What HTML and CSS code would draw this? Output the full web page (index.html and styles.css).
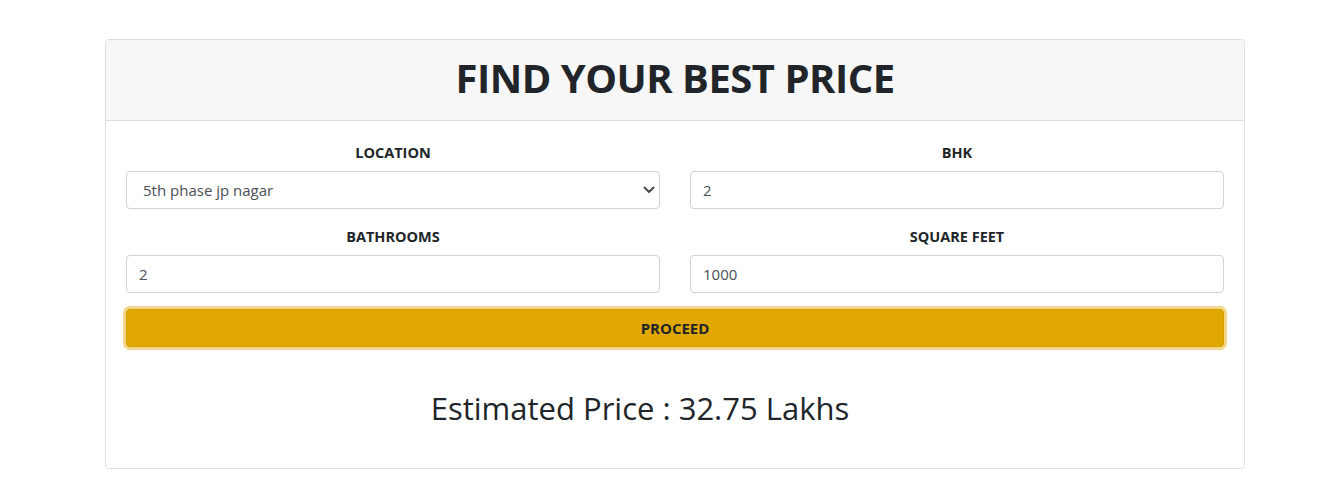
FILE: index.html
```html
<!DOCTYPE html>
<html lang="en">
<head>
<meta charset="utf-8">
<title>Find your best price</title>
<link rel="stylesheet" href="styles.css">
</head>
<body>
<main class="page">
  <section class="card">
    <header class="card-header">
      <h1 class="title">FIND YOUR BEST PRICE</h1>
    </header>
    <form class="card-body">
      <div class="grid">
        <div class="field">
          <label class="label" for="loc">LOCATION</label>
          <div class="select-wrap">
            <select id="loc" class="control select">
              <option>5th phase jp nagar</option>
            </select>
            <svg class="chevron" width="12" height="8" viewBox="0 0 12 8" aria-hidden="true"><path d="M1.5 1.5 L6 6 L10.5 1.5" fill="none" stroke="#4a4a4a" stroke-width="2" stroke-linecap="round" stroke-linejoin="round"/></svg>
          </div>
        </div>
        <div class="field">
          <label class="label" for="bhk">BHK</label>
          <input id="bhk" class="control" type="text" value="2">
        </div>
        <div class="field">
          <label class="label" for="bath">BATHROOMS</label>
          <input id="bath" class="control" type="text" value="2">
        </div>
        <div class="field">
          <label class="label" for="sqft">SQUARE FEET</label>
          <input id="sqft" class="control" type="text" value="1000">
        </div>
      </div>
      <button type="button" class="btn">PROCEED</button>
      <h2 class="result">Estimated Price : 32.75 Lakhs</h2>
    </form>
  </section>
</main>
</body>
</html>
```

FILE: styles.css
```css
* { box-sizing: border-box; }
html, body { margin: 0; padding: 0; background: #fff; }
body {
  font-family: "Open Sans", "Noto Sans", "Liberation Sans", sans-serif;
  color: #212529;
}
.page { padding-top: 39px; padding-left: 105px; }
.card {
  width: 1140px;
  border: 1px solid #dfdfdf;
  border-radius: 4px;
  background: #fff;
}
.card-header {
  height: 81px;
  background: #f7f7f7;
  border-bottom: 1px solid #dfdfdf;
  border-radius: 3px 3px 0 0;
  display: flex;
  align-items: center;
  justify-content: center;
}
.title {
  margin: 0;
  font-size: 40px;
  font-weight: 700;
  letter-spacing: -0.5px;
  line-height: 1;
  padding-bottom: 4px;
}
.card-body { padding: 20px 20px 20px; display: flex; flex-direction: column; }
.grid {
  display: grid;
  grid-template-columns: 534px 534px;
  column-gap: 30px;
  row-gap: 16px;
}
.field { display: flex; flex-direction: column; }
.label {
  display: block;
  text-align: center;
  font-size: 14.5px;
  font-weight: 700;
  line-height: 24px;
  margin-bottom: 6px;
}
.control {
  width: 100%;
  height: 38px;
  border: 1px solid #ced4da;
  border-radius: 4px;
  padding: 0 12px;
  font-family: inherit;
  font-size: 15px;
  color: #495057;
  background: #fff;
  outline: none;
}
.select-wrap { position: relative; }
.select {
  appearance: none;
  -webkit-appearance: none;
  padding-left: 16px;
}
.chevron { position: absolute; right: 5px; top: 15px; pointer-events: none; }
.btn {
  margin-top: 16px;
  height: 38px;
  width: 100%;
  background: #e0a800;
  border: 1px solid #d39e00;
  border-radius: 4px;
  box-shadow: 0 0 0 3px #f2d68a;
  font-family: inherit;
  font-size: 15px;
  font-weight: 700;
  color: #212529;
}
.result {
  margin: 42px 0 21px;
  padding-right: 70px;
  text-align: center;
  font-size: 31px;
  font-weight: 400;
  line-height: 38px;
}
```
